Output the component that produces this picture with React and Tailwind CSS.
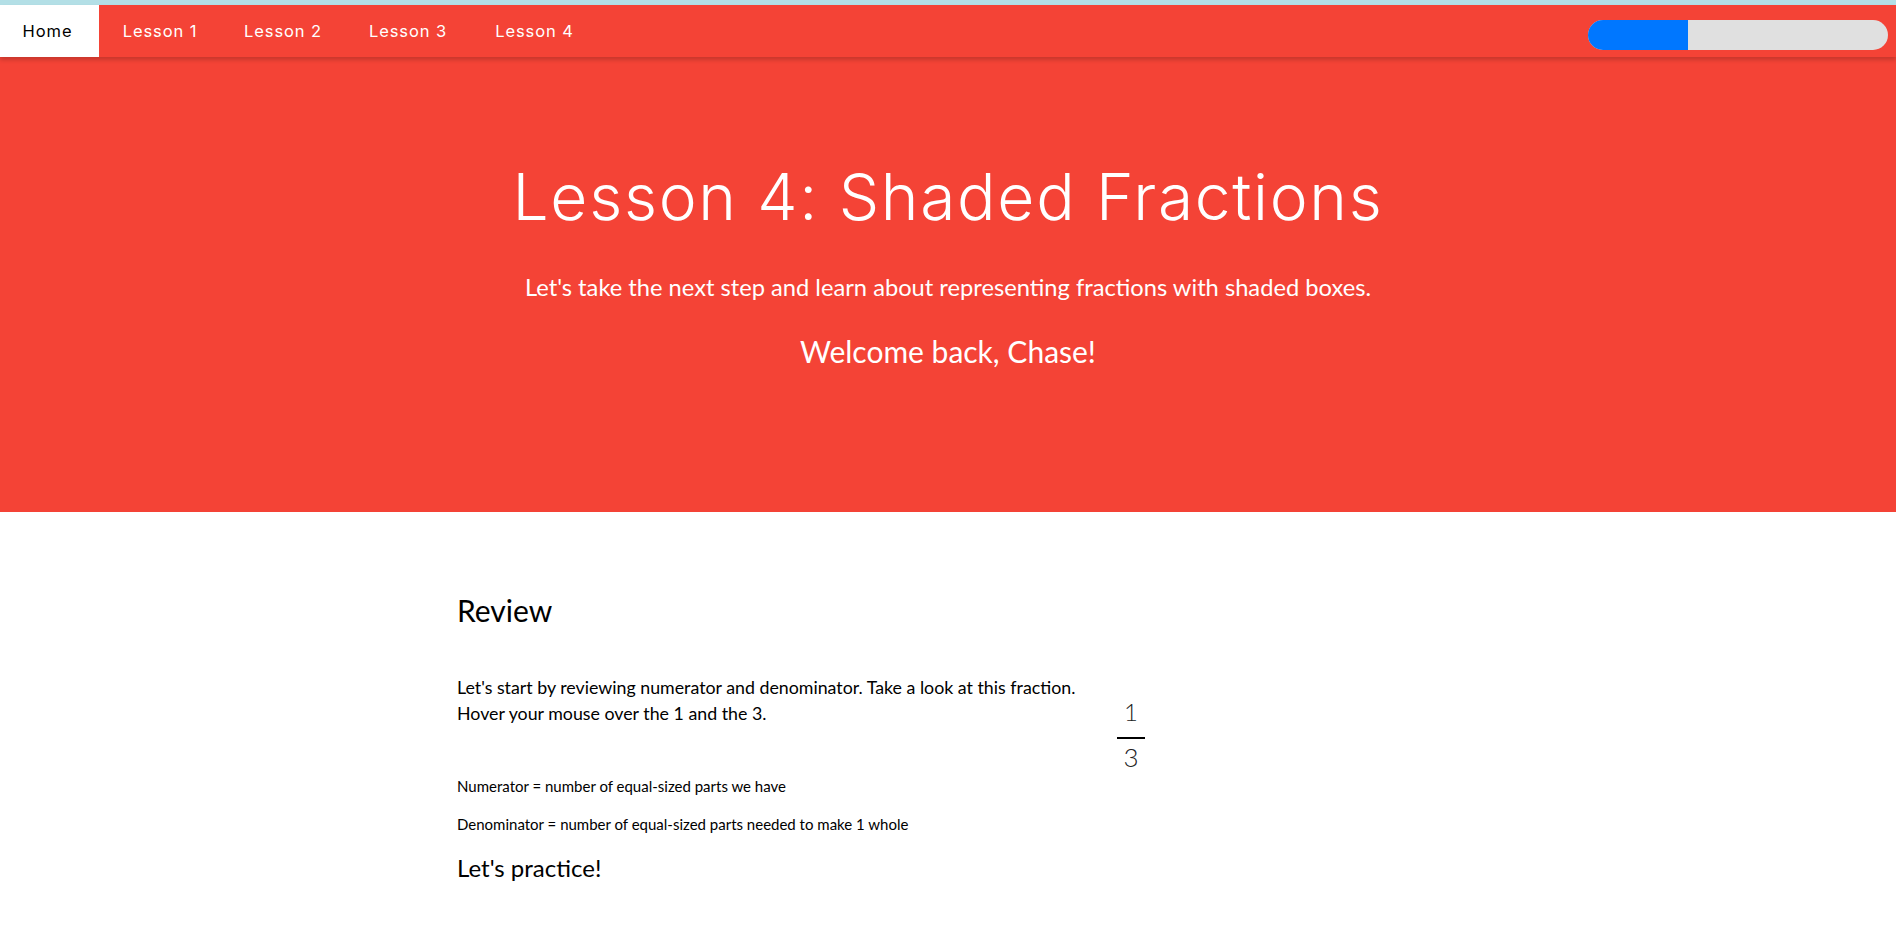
import React from 'react'

const lessons = [
  { label: 'Lesson 1', width: 'w-[122px]' },
  { label: 'Lesson 2', width: 'w-[124px]' },
  { label: 'Lesson 3', width: 'w-[126px]' },
  { label: 'Lesson 4', width: 'w-[127px]' },
]

const App = () => {
  const progress = 33.3

  return (
    <div className="min-h-screen bg-white text-black font-['Lato','Noto_Sans',sans-serif]">
      {/* thin top strip */}
      <div className="h-[5px] bg-[#b3dfe6]" />

      <header className="bg-[#f44336] text-white">
        {/* Nav */}
        <nav className="relative z-10 h-[52px] flex justify-between shadow-[0_3px_4px_rgba(0,0,0,0.18)] font-['Inter',sans-serif] text-[16.5px] tracking-[0.9px]">
          <div className="flex h-full">
            <a href="#" className="w-[99px] h-full bg-white text-black flex items-center justify-center pr-[4px]">
              Home
            </a>
            {lessons.map((l) => (
              <a key={l.label} href="#" className={`${l.width} h-full flex items-center justify-center`}>
                {l.label}
              </a>
            ))}
          </div>
          <div className="mt-[15px] mr-[8px] w-[300px] h-[30px] rounded-full bg-[#e0e0e0] overflow-hidden flex">
            <div className="h-full bg-[#0077ff]" style={{ width: `${progress}%` }} />
          </div>
        </nav>

        {/* Hero */}
        <section className="h-[455px] flex flex-col items-center pt-[100px]">
          <h1 className="font-['Inter',sans-serif] font-light text-[64px] leading-[80px] tracking-[1.7px]">
            Lesson 4: Shaded Fractions
          </h1>
          <p className="mt-[37px] text-[23.7px] leading-[26px]">
            Let's take the next step and learn about representing fractions with shaded boxes.
          </p>
          <p className="mt-[34px] text-[30px] leading-[34px]">Welcome back, Chase!</p>
        </section>
      </header>

      {/* Content */}
      <main className="w-[982px] mx-auto pt-[81px]">
        <h2 className="text-[30px] leading-[34px]">Review</h2>

        <div className="mt-[47px] flex">
          <p className="w-[660px] text-[17.8px] leading-[26px]">
            Let's start by reviewing numerator and denominator. Take a look at this fraction.
            <br />
            Hover your mouse over the 1 and the 3.
          </p>
          <div className="mt-[26px] w-[28px] flex flex-col items-center font-light text-[#222]">
            <span className="text-[24px] leading-[24px] cursor-pointer">1</span>
            <div className="mt-[13px] h-[2px] w-[28px] bg-black" />
            <span className="mt-[5px] text-[26px] leading-[26px] cursor-pointer">3</span>
          </div>
        </div>

        <p className="mt-[7px] text-[15px] leading-[18px]">Numerator = number of equal-sized parts we have</p>
        <p className="mt-[20px] text-[15px] leading-[18px]">
          Denominator = number of equal-sized parts needed to make 1 whole
        </p>

        <h3 className="mt-[20px] text-[24px] leading-[29px]">Let's practice!</h3>
      </main>
    </div>
  )
}

export default App
